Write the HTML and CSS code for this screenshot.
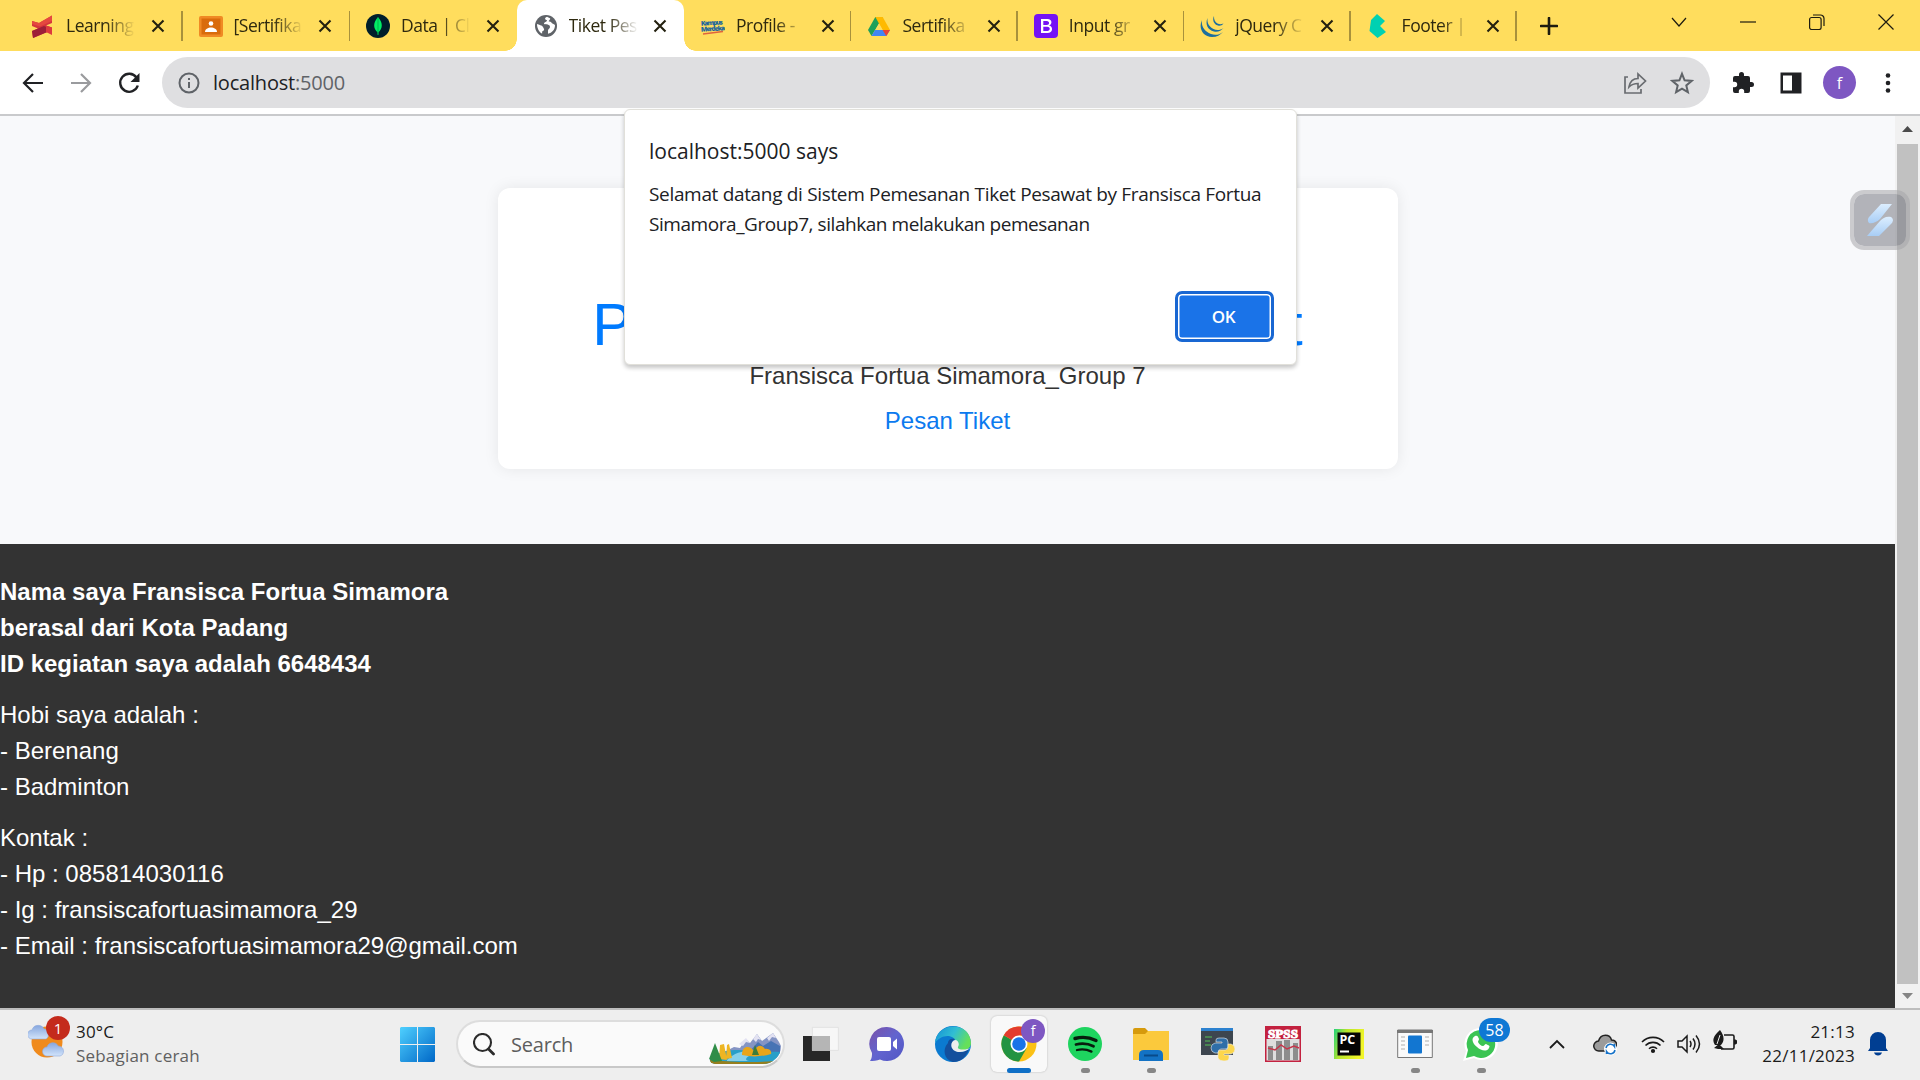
FILE: index.html
```html
<!DOCTYPE html>
<html lang="id">
<head>
<meta charset="utf-8">
<title>Tiket Pesawat</title>
<link rel="stylesheet" href="styles.css">
</head>
<body>
<svg class="defs" width="0" height="0">
  <symbol id="x" viewBox="0 0 14 14"><path d="M1.500 1.500l11 11M12.500 1.500l-11 11" stroke="#23200f" stroke-width="2.100" fill="none"/></symbol>
  <linearGradient id="gw" x1="0" y1="0" x2="1" y2="1"><stop offset="0" stop-color="#4fd0ff"/><stop offset="1" stop-color="#0067c7"/></linearGradient>
  <linearGradient id="gp" x1="0" y1="0" x2="0" y2="1"><stop offset="0" stop-color="#dceeff"/><stop offset="1" stop-color="#a8cdf5"/></linearGradient>
  <linearGradient id="gc" x1="0" y1="0" x2="0" y2="1"><stop offset="0" stop-color="#86a6de"/><stop offset="1" stop-color="#d2e4fb"/></linearGradient>
</svg>

<header class="tabs">
  <div class="tab wide">
    <svg class="fav" viewBox="0 0 24 24"><path d="M1 7l7 2 13-7.500V9l-6 2.500 6 2V16L2 24l-1-7 6-2.500L1 12z" fill="#d5353c"/><path d="M1 17l12-5 8 3.500v.5L2 24z" fill="#9d1f38"/><path d="M1 7l7 2 13-7.500V7L9 12.500 1 10z" fill="#e5483f"/><path d="M15 11.500l6 2V21l-6-3z" fill="#dc3a3e"/></svg>
    <span class="label">Learning</span><svg class="close"><use href="#x"/></svg>
  </div>
  <div class="tab wide">
    <svg class="fav" viewBox="0 0 24 24"><rect y="2" width="24" height="21" rx="2" fill="#f08a24"/><rect x="2.500" y="4.500" width="19" height="16" fill="#d96c0c"/><circle cx="12" cy="9.500" r="2.300" fill="#fff"/><path d="M6 18c0-6 12-6 12 0z" fill="#fff"/></svg>
    <span class="label">[Sertifika</span><svg class="close"><use href="#x"/></svg>
  </div>
  <div class="tab wide nosep">
    <svg class="fav" viewBox="0 0 24 24"><circle cx="12" cy="12" r="12" fill="#001e2b"/><path d="M12 3c5 6 5 11 .4 15.500V21h-.8v-2.500C7 14 7 9 12 3z" fill="#00ed64"/><path d="M12 4v16" stroke="#00a34c" stroke-width=".8"/></svg>
    <span class="label">Data | Cl</span><svg class="close"><use href="#x"/></svg>
  </div>
  <div class="tab wide active">
    <svg class="fav" viewBox="0 0 24 24"><circle cx="12" cy="12" r="11" fill="#5f6368"/><path d="M13 2.800c-3 1-2 3 0 3.500 0 2-3 1.500-3 3.700 2 .6 6 0 6 3 0 1.500-2 1.800-2 3.500v3.200c4-1 7-4 7-8.500 0-1-2-1-3-2s-1.500-2-3-1.500c-1-1.500 2-2 1-3.500zM3 10c2 1 5 1 6 3s2 3 0 4 0 2-1 2.600C5 18 3 14 3 10z" fill="#fff"/></svg>
    <span class="label">Tiket Pes</span><svg class="close"><use href="#x"/></svg>
  </div>
  <div class="tab">
    <svg class="fav" viewBox="0 0 24 24"><g font-family="Open Sans,sans-serif" font-weight="800" font-size="6.600" fill="#1a659c"><text x="0" y="11" textLength="22" transform="rotate(-3 12 10)">Kampus</text><text x="0" y="17" textLength="24" transform="rotate(-3 12 15)">Merdeka</text></g><path d="M2 20l20-2.500" stroke="#e0633c" stroke-width="1.400"/></svg>
    <span class="label">Profile -</span><svg class="close"><use href="#x"/></svg>
  </div>
  <div class="tab">
    <svg class="fav" viewBox="0 0 24 24"><path d="M8.300 3h7.400L12 9.500 4.500 22 1 16z" fill="#1ea05a"/><path d="M15.700 3L23 16h-7.400L8.300 3z" fill="#ffba00"/><path d="M8 16h15l-3.700 6H4.500z" fill="#4285f4"/><path d="M15.600 16H23l-3.700 6z" fill="#ea4335"/><path d="M12 9.500L15.600 16H8.300z" fill="#ffdd5d"/></svg>
    <span class="label">Sertifika</span><svg class="close"><use href="#x"/></svg>
  </div>
  <div class="tab">
    <svg class="fav" viewBox="0 0 24 24"><rect width="24" height="24" rx="4" fill="#7412f5"/><path d="M7 5h6.500c5 0 5 5.500 1.500 6.500 4.500 1 4 7.500-1.500 7.500H7zM9.300 7v4h3.500c3 0 3-4 0-4zM9.300 12.800V17h4c3.300 0 3.300-4.200 0-4.200z" fill="#fff" fill-rule="evenodd"/></svg>
    <span class="label">Input gr</span><svg class="close"><use href="#x"/></svg>
  </div>
  <div class="tab">
    <svg class="fav" viewBox="0 0 24 24" fill="#1c6e9e"><path d="M2 6c-4 8 1 17 10 17 5 0 8-2 11-5-4 3-8 3.500-12 2C4 17 1 12 2 6z"/><path d="M7.500 4c-2.500 6 0 12 6.500 13.500 4 .8 7-.5 9.500-3.500-3.500 2.500-7 2.500-10 1C8.500 12.500 7 8.500 7.500 4z"/><path d="M14 2c-2 4 0 8.500 4 9.500 2 .5 4 0 5.500-2-2.500 1-4 1-6 0-2.600-1.600-3.700-4-3.500-7.500z"/></svg>
    <span class="label">jQuery C</span><svg class="close"><use href="#x"/></svg>
  </div>
  <div class="tab">
    <svg class="fav" viewBox="0 0 24 24"><path d="M10 0L4 6 2.500 17l8 7 8.500-6-6-6 5-5z" fill="#00d1b2"/></svg>
    <span class="label">Footer |</span><svg class="close"><use href="#x"/></svg>
  </div>
  <svg class="plus" viewBox="0 0 18 18"><path d="M9 1v16M1 9h16" stroke="#1d1b10" stroke-width="2.600" stroke-linecap="round"/></svg>
  <div class="winctl">
    <svg viewBox="0 0 16 16"><path d="M1 4l7 8 7-8"/></svg>
    <svg viewBox="0 0 16 16"><path d="M0 8h16"/></svg>
    <svg viewBox="0 0 16 16"><rect x=".6" y="3.500" width="11.500" height="12" rx="2"/><path d="M4 1h7.500a3.500 3.500 0 0 1 3.500 3.500V12"/></svg>
    <svg viewBox="0 0 16 16"><path d="M.5 .5l15 15M15.500 .5l-15 15"/></svg>
  </div>
</header>

<nav class="toolbar">
  <svg class="nav" viewBox="0 0 24 24"><path d="M22 12H3M12 3l-9 9 9 9" stroke="#202124" stroke-width="2.200" fill="none"/></svg>
  <svg class="nav" viewBox="0 0 24 24"><path d="M2 12h19M12 3l9 9-9 9" stroke="#9a9b9e" stroke-width="2.200" fill="none"/></svg>
  <svg class="nav" viewBox="0 0 24 24"><path d="M19.500 6.500A9 9 0 1 0 20.800 14.500" stroke="#202124" stroke-width="2.400" fill="none"/><path d="M22.500 2v9h-9z" fill="#202124"/></svg>
  <div class="omnibox">
    <svg class="info" viewBox="0 0 22 22" fill="none" stroke="#5f6368" stroke-width="2"><circle cx="11" cy="11" r="9.500"/><path d="M11 10v6M11 6v2"/></svg>
    <span class="url">localhost<i>:5000</i></span>
    <svg class="share" viewBox="0 0 24 24" fill="none" stroke="#696c70" stroke-width="1.700"><path d="M5 6H2v16h16v-4"/><path d="M6 16c1-6 4-8.500 9-8.500V3l7.500 7-7.500 7v-4.500c-4 0-6.500 1-9 3.500z"/></svg>
    <svg class="star" viewBox="0 0 24 24" fill="none" stroke="#5f6368" stroke-width="2"><path d="M12 2.800l2.600 6.500 7 .6-5.300 4.500 1.600 6.800L12 17.600l-5.900 3.600 1.600-6.800-5.300-4.500 7-.6z"/></svg>
  </div>
  <div class="actions">
    <svg viewBox="0 0 24 24"><path d="M20.500 11H19V7a2 2 0 0 0-2-2h-4V3.500a2.500 2.500 0 0 0-5 0V5H4a2 2 0 0 0-2 2v3.800h1.500a2.700 2.700 0 0 1 0 5.400H2V20a2 2 0 0 0 2 2h3.800v-1.500a2.700 2.700 0 0 1 5.400 0V22H17a2 2 0 0 0 2-2v-4h1.500a2.500 2.500 0 0 0 0-5z" fill="#202124"/></svg>
    <svg viewBox="0 0 24 24"><path d="M1.500 1.500h21v21h-21z" fill="#202124"/><path d="M4 4.500h9v15H4z" fill="#fff"/></svg>
    <span class="avatar">f</span>
    <svg viewBox="0 0 24 24" fill="#202124"><circle cx="12" cy="4.500" r="2.300"/><circle cx="12" cy="12" r="2.300"/><circle cx="12" cy="19.500" r="2.300"/></svg>
  </div>
</nav>

<div class="viewport">
  <div class="page">
    <main class="hero">
      <section class="card">
        <h1>Pemesanan Tiket Pesawat</h1>
        <p>Fransisca Fortua Simamora_Group 7</p>
        <a>Pesan Tiket</a>
      </section>
    </main>
    <footer class="foot">
      <p><b>Nama saya Fransisca Fortua Simamora<br>berasal dari Kota Padang<br>ID kegiatan saya adalah 6648434</b></p>
      <p>Hobi saya adalah :<br>- Berenang<br>- Badminton</p>
      <p>Kontak :<br>- Hp : 085814030116<br>- Ig : fransiscafortuasimamora_29<br>- Email : fransiscafortuasimamora29@gmail.com</p>
    </footer>
  </div>
  <div class="scroll">
    <svg viewBox="0 0 11 6"><path d="M0 6L5.500 0 11 6z" fill="#4b4b4b"/></svg>
    <div class="thumb"></div>
    <svg viewBox="0 0 11 6"><path d="M0 0l5.500 6L11 0z" fill="#858585"/></svg>
  </div>
  <div class="widget"><svg viewBox="0 0 26 34"><path d="M14 1h11L13 16c-3 3-8 5-11 4-2-3-1-5 1-7z" fill="url(#gp)"/><path d="M12 33H0l13-15c3-3 6-5 11-4 3 2 2 5 0 7z" fill="url(#gp)"/></svg></div>
</div>

<div class="dialog">
  <h2>localhost:5000 says</h2>
  <p><span class="l1">Selamat datang di Sistem Pemesanan Tiket Pesawat by Fransisca Fortua</span><br><span class="l2">Simamora_Group7, silahkan melakukan pemesanan</span></p>
  <button class="ok">OK</button>
</div>

<div class="taskbar">
  <div class="weather">
    <div class="wicon">
      <svg viewBox="0 0 38 36"><circle cx="19" cy="18" r="15.500" fill="#f08a1c"/><path d="M4 15a4.500 4.500 0 0 1 0-9C6-1 15 1 16 5c5 0 6 8 2 10z" fill="url(#gc)" stroke="#8fa9dc" stroke-width=".6"/><path d="M19 32a4.500 4.500 0 0 1 0-9c2-6 10-5 11-1 7 0 7 9 2 10z" fill="url(#gc)" stroke="#8fa9dc" stroke-width=".6"/></svg>
      <span class="one">1</span>
    </div>
    <div class="wtext"><span>30°C</span><span class="dim">Sebagian cerah</span></div>
  </div>
  <svg class="start" viewBox="0 0 35 35" fill="url(#gw)"><path d="M1 0h16v17H0V1zM18 0h16l1 1v16H18zM0 18h17v17H1l-1-1zM18 18h17v16l-1 1H18z"/></svg>
  <div class="search">
    <svg class="mag" viewBox="0 0 22 23" fill="none" stroke="#2b2b2b"><circle cx="9.500" cy="9.500" r="8.500" stroke-width="2.100"/><path d="M15.500 16l5 5" stroke-width="2.800" stroke-linecap="round"/></svg>
    <span>Search</span>
    <svg class="scene" viewBox="0 0 72 32"><path d="M15 20l10-5 6 1 6-9 4 4 7-9 5 7 11-8 6 9 2 4v12H15z" fill="#8494c4"/><path d="M42 18l7-8 5 4 8-5 9 5v8H40z" fill="#4773b4"/><path d="M30 12l7-6 4 5-4-1-3 4zM44 7l4-5 4 6-3-1-2 3zM58 6l6-5 3 5-4-1-3 4z" fill="#e3e2f2"/><path d="M1 26c20-13 36-6 71-6-1 7-6 12-12 12H6c-4 0-6-3-5-6z" fill="#299fc8"/><path d="M18 28c8-8 18-10 30-9l-8 5c-5 3-3 5 2 5H18z" fill="#86d0ea"/><path d="M1 28c20 2 45 3 64 1-2 2-4 3-7 3H6c-3 0-5-1-5-4z" fill="#977f1e"/><path d="M33 23c0-11 9-9 12-4 4-7 8-6 11-2 5-1 7 3 6 5-10 3-20 3-29 1z" fill="#e8a519"/><path d="M10 27l1-14 4-1 3 16zM17 27l1-14 2-1 3 14z" fill="#edb523"/><path d="M6 11L0 27l5 3 8-1z" fill="#2f8d48"/><path d="M46 13l-3 10h7z" fill="#3c7d3a"/></svg>
  </div>
  <div class="apps">
    <div class="app"><svg viewBox="0 0 36 36"><path d="M0 10h27v25H0z" fill="#272727"/><path d="M9.400 1.400h26v23h-26z" fill="#f7f7f7" stroke="#dedede" stroke-width=".8"/><path d="M9 10h18v15H9z" fill="#b5b5b5"/></svg></div>
    <div class="app"><svg viewBox="0 0 36 36"><linearGradient id="gv" x1="0" y1="0" x2="1" y2="1"><stop offset="0" stop-color="#7b52a8"/><stop offset=".5" stop-color="#6264cf"/><stop offset="1" stop-color="#5156c4"/></linearGradient><path d="M18 1a17 17 0 1 1-7 32.500C8 35 4 35 1 35c2-3 2-5 2-8A17 17 0 0 1 18 1z" fill="url(#gv)"/><rect x="8" y="11" width="14" height="14" rx="2" fill="#fff"/><path d="M24 16l4-3.500v11L24 20z" fill="#fff"/></svg></div>
    <div class="app"><svg viewBox="0 0 36 36"><linearGradient id="ge" x1="0" y1="0" x2="1" y2=".4"><stop offset="0" stop-color="#138fd6"/><stop offset=".55" stop-color="#31bed3"/><stop offset="1" stop-color="#66e05a"/></linearGradient><circle cx="18" cy="18" r="18" fill="#0b7ad0"/><path d="M0 17C1-4 35-6 36 17c0 6-6 8-11 7-5-1-2-3-3-6C19 6 5 9 0 17z" fill="url(#ge)"/><path d="M13 17c0-4 4-5 7-4-6 4-4 13 5 13 4 0 7-2 9-3C31 32 25 36 18 36 9 34 7 23 13 17z" fill="#134f9d"/><path d="M20 14c-6 2-5 12 5 12 4 0 7-2 9-3l3-1-5 1c-3 1-10 1-9-2 2-3 0-7-3-7z" fill="#eee"/></svg></div>
    <div class="app current"><svg viewBox="0 0 36 36"><circle cx="18" cy="18" r="17.500" fill="#fbc116"/><path d="M18 18L2.800 9.200A17.500 17.500 0 0 0 18 35.500l7.500-13z" fill="#229342"/><path d="M18 18L2.800 9.200A17.500 17.500 0 0 1 33.200 9.500H18z" fill="#e33b2e"/><circle cx="18" cy="18" r="8.500" fill="#fff"/><circle cx="18" cy="18" r="6.800" fill="#1a73e8"/></svg><span class="prof">f</span><i></i></div>
    <div class="app run"><svg viewBox="0 0 36 36"><circle cx="18" cy="18" r="17" fill="#1ed45f"/><g fill="none" stroke="#071d0d" stroke-linecap="round"><path d="M8 12.500c7-2 15-1 21 2" stroke-width="3.400"/><path d="M9 18.500c6-1.500 12-1 17.500 1.800" stroke-width="2.800"/><path d="M10 24c5-1.200 10-.6 14.500 1.600" stroke-width="2.300"/></g></svg><i></i></div>
    <div class="app run"><svg viewBox="0 0 36 36"><path d="M0 4q0-2 2-2h10l3 3v5H0z" fill="#d69a0c"/><path d="M0 8h12l3-3h21v29H0z" fill="#fbc93c"/><path d="M6 35v-6q0-5 5-5h14q5 0 5 5v6z" fill="#1372c4"/><path d="M11 29.500h14" stroke="#084a8a" stroke-width="2"/></svg><i></i></div>
    <div class="app"><svg viewBox="0 0 36 36"><path d="M2 2h32v27H2z" fill="#3d464f"/><path d="M2 2h32v3H2z" fill="#2c81cf"/><path d="M6 11h7M6 15h5M6 19h6" stroke="#4d9b54" stroke-width="1.400"/><g stroke="#eee" stroke-width=".6"><path d="M20 12h5q4 0 4 4v5q0 2-3 2h-4q-3 0-3 4h-3q-4-1-4-5t4-5h7v-1h-6v-2q0-2 3-2z" fill="#2f6ea8"/><path d="M29 18h3q4 1 4 5t-4 5h-7v1h5v3q0 3-5 3t-6-3v-5q0-3 3-3h4q3 0 3-3z" fill="#fcd64c"/></g></svg></div>
    <div class="app"><svg viewBox="0 0 36 36"><path d="M0 0h36v36H0z" fill="#c3213f"/><path d="M1.500 13h33v21.500h-33z" fill="#dedede"/><text x="3" y="11.500" font-family="Liberation Serif,serif" font-weight="700" font-size="13" fill="#fff" stroke="#fff" textLength="30" lengthAdjust="spacingAndGlyphs">SPSS</text><path d="M3 20h5v14H3zM11 15h6v19h-6zM19 14h6v20h-6zM28 17h5v17h-5z" fill="#8d8d8d"/><path d="M3 22l7 2 6-5 6 4 7-3 5 2" stroke="#c6354a" stroke-width="1.500" fill="none"/></svg></div>
    <div class="app"><svg viewBox="0 0 36 36"><linearGradient id="gy" x1="0" y1="0" x2="1" y2=".3"><stop offset="0" stop-color="#1fd17c"/><stop offset=".4" stop-color="#b7e52c"/><stop offset="1" stop-color="#f1f52a"/></linearGradient><path d="M3 3h30v30H3z" fill="url(#gy)"/><path d="M6.500 6.500h23v23h-23z" fill="#050505"/><text x="8.500" y="18" font-family="Open Sans,sans-serif" font-weight="700" font-size="12.500" fill="#fff">PC</text><path d="M9 25.500h9" stroke="#fff" stroke-width="2"/></svg></div>
    <div class="app run"><svg viewBox="0 0 36 36"><path d="M.7 4h34.600v27.500H.7z" fill="#fafafa" stroke="#777"/><path d="M0 4h36v3H0z" fill="#777"/><rect x="11" y="9.500" width="14" height="18" rx="1" fill="#1276d1"/><path d="M4 11h4M4 15h4M4 19h4M4 23h4M28 11h4M28 15h4M28 19h4" stroke="#c8c8c8" stroke-width="1.500"/></svg><i></i></div>
    <div class="app run"><svg viewBox="0 0 36 36"><path d="M18 2a16 16 0 1 1-7 30L0 35l3-10A16 16 0 0 1 18 2z" fill="#fff"/><path d="M18 4a14 14 0 1 1-7 26L3 32l2-8A14 14 0 0 1 18 4z" fill="#3bc453"/><path d="M12 10c2-1 3 0 4 3 0 1-1 2-1 3 1 2 3 4 5 4 1 0 2-2 3-2 4 2 4 2 3 4-2 4-8 3-12-1-5-4-6-9-2-11z" fill="#fff"/></svg><span class="cnt">58</span><i></i></div>
  </div>
  <div class="tray">
    <svg class="chev" viewBox="0 0 16 10"><path d="M1 9l7-7 7 7" fill="none" stroke="#1b1b1b" stroke-width="1.800"/></svg>
    <svg class="t1" viewBox="0 0 24 24"><path d="M6 19a5 5 0 0 1-.5-10C8 1 17 2 18.500 8c5 0 6 5 5 7l-8 4z" fill="#9b9b9b" stroke="#222" stroke-width="1.500"/><circle cx="17.500" cy="17" r="6.500" fill="#fff"/><path d="M13 16a4.600 4.600 0 0 1 8.500-1.500V12M22 18a4.600 4.600 0 0 1-8.500 1.500V22" fill="none" stroke="#1672c8" stroke-width="1.500"/></svg>
    <svg class="t2" viewBox="0 0 24 24" fill="none" stroke="#1b1b1b" stroke-width="1.600"><path d="M1 10a15.500 15.500 0 0 1 22 0M4.500 13.500a10.500 10.500 0 0 1 15 0M8 16.800a5.700 5.700 0 0 1 8 0"/><circle cx="12" cy="19" r="1.300" fill="#1b1b1b"/></svg>
    <svg class="t3" viewBox="0 0 24 24" fill="none" stroke="#1b1b1b" stroke-width="1.500"><path d="M1 9h4l5-5v16l-5-5H1zM13 9q2 3 0 6M16 6.500q4 5.500 0 11M19 3.500q7 8.500 0 17"/></svg>
    <svg class="t4" viewBox="0 0 24 24"><path d="M11 5h8.500q1.500 0 1.500 1.500v11q0 1.500-1.500 1.500H8" fill="none" stroke="#1b1b1b" stroke-width="1.600"/><path d="M21 9.500h1.500l1.500 1v3l-1.500 1H21zM7 0c4 5 5 11 1 15H2C-2 9 2 5 7 0zM1 18l6-5v2l4 4H5z" fill="#1b1b1b"/><path d="M7 5L4 14" stroke="#eee"/></svg>
    <div class="clock"><span>21:13</span><span>22/11/2023</span></div>
    <svg class="bell" viewBox="0 0 20 24"><path d="M2 16V8a8 8 0 0 1 16 0v8l2 3H0zM6 20.500h8q-1 3-4 3t-4-3z" fill="#003e92"/></svg>
  </div>
</div>
</body>
</html>
```
FILE: styles.css
```css
* { box-sizing: border-box; }
body { margin: 0; width: 1920px; height: 1080px; overflow: hidden; display: flex; flex-direction: column; position: relative; font-family: "Open Sans", "Noto Sans", sans-serif; background: #fff; }
svg { display: block; flex: none; }
.defs { position: absolute; }

/* tab strip */
.tabs { height: 51px; flex: none; background: #ffdd5d; display: flex; align-items: center; padding-left: 14px; }
.tab { position: relative; width: 166.400px; height: 51px; flex: none; display: flex; align-items: center; padding-left: 17px; }
.tab.wide { width: 167.500px; }
.tab::after { content: ""; position: absolute; right: -1px; top: 11px; width: 1.500px; height: 30px; background: #a8913c; }
.tab.nosep::after { display: none; }
.fav { width: 24px; height: 24px; }
.label { width: 68px; margin: -2px 0 0 11px; font-size: 17.500px; letter-spacing: -.45px; white-space: nowrap; color: #2e290f; -webkit-mask-image: linear-gradient(90deg, #000 58%, transparent 102%); mask-image: linear-gradient(90deg, #000 58%, transparent 102%); }
.close { width: 14px; height: 14px; margin-left: 16.500px; }
.tab.active { background: #fff; border-radius: 10px 10px 0 0; }
.tab.active::before, .tab.active::after { content: ""; position: absolute; top: auto; bottom: 0; width: 12px; height: 12px; }
.tab.active::before { left: -12px; background: radial-gradient(circle at 0 0, #ffdd5d 11.500px, #fff 12px); }
.tab.active::after { right: -12px; background: radial-gradient(circle at 100% 0, #ffdd5d 11.500px, #fff 12px); }
.plus { width: 18px; height: 18px; margin-left: 24px; }
.winctl { display: flex; margin-left: auto; gap: 53px; padding-right: 26px; padding-bottom: 8px; }
.winctl svg { width: 16px; height: 16px; fill: none; stroke: #1d1b10; stroke-width: 1.200; }

/* toolbar */
.toolbar { height: 65px; flex: none; border-bottom: 2px solid #c9cacc; display: flex; align-items: center; padding-left: 21px; gap: 24px; background: #fff; }
.nav { width: 24px; height: 24px; }
.omnibox { width: 1548px; height: 51px; margin: 0 0 0 -3px; border-radius: 26px; background: #dfdfe1; display: flex; align-items: center; padding: 0 16px 0 16px; }
.info { width: 22px; height: 22px; }
.url { margin-left: 13px; font-size: 20px; letter-spacing: -.2px; color: #202124; flex: 1; }
.url i { font-style: normal; color: #5f6368; }
.share { width: 24px; height: 24px; margin-right: 23px; }
.star { width: 24px; height: 24px; }
.actions { display: flex; align-items: center; gap: 20px; margin-left: -3px; }
.actions svg { width: 24px; height: 24px; }
.actions svg + svg { margin-left: 4px; }
.avatar { width: 33px; height: 33px; border-radius: 50%; background: #7e57c2; color: #fff; font-size: 16px; display: flex; align-items: center; justify-content: center; }

/* page */
.viewport { height: 892px; flex: none; display: flex; position: relative; }
.page { width: 1895px; font-family: "Liberation Sans", Arial, sans-serif; background: #f8f9fb; display: flex; flex-direction: column; }
.hero { height: 428px; padding-top: 72px; }
.card { width: 900px; height: 281px; margin: 0 auto; border-radius: 12px; background: #fff; box-shadow: 0 0 15px rgba(0,0,0,.08); display: flex; flex-direction: column; align-items: center; padding-top: 103px; color: #333; font-size: 24px; line-height: 36px; }
.card h1 { margin: 0; font-weight: 400; font-size: 60px; line-height: 67px; color: #007bff; }
.card p { margin: 0 0 9px; }
.card a { color: #0b7aef; }
.foot { flex: 1; background: #333; color: #fff; padding-top: 30px; font-size: 24px; line-height: 36px; }
.foot p { margin: 0 0 15px; }
.scroll { width: 25px; background: #f1f1f1; display: flex; flex-direction: column; align-items: center; padding: 10px 0 9px; }
.scroll svg { width: 11px; height: 6px; }
.thumb { width: 21px; flex: 1; margin: 12px 0 9px; background: #c1c1c1; }
.widget { position: absolute; left: 1850px; top: 74px; width: 60px; height: 60px; border-radius: 14px; background: rgba(120,122,132,.55); background-clip: padding-box; border: 4px solid rgba(165,165,170,.55); display: flex; align-items: center; justify-content: center; }
.widget svg { width: 26px; height: 34px; }

/* alert */
.dialog { position: absolute; left: 624px; top: 109px; width: 673px; height: 256px; border: 1px solid #e1e0da; border-radius: 6px; background: #fff; box-shadow: 0 3px 4px rgba(0,0,0,.22); padding: 24px 22px 22px 24px; display: flex; flex-direction: column; color: #202124; }
.dialog h2 { margin: 0; font-weight: 400; font-size: 21px; line-height: 34px; letter-spacing: 0; }
.dialog p { margin: 11px 0 0; font-size: 19px; line-height: 30px; white-space: nowrap; }
.l1 { letter-spacing: -.33px; }
.l2 { letter-spacing: -.44px; }
.ok { margin: auto 0 0 auto; width: 99px; height: 51px; border: 3px solid #1967d2; border-radius: 7px; background: #1a73e8; box-shadow: inset 0 0 0 1.500px #fff; color: #fff; font: 600 17px "Open Sans", sans-serif; letter-spacing: -.3px; padding: 0 2px 0 0; }

/* taskbar */
.taskbar { height: 72px; flex: none; border-top: 2px solid #bdbdbd; background: #eee; display: flex; align-items: center; color: #1b1b1b; font-size: 17px; padding-bottom: 2px; }
.weather { width: 400px; display: flex; padding-left: 28px; gap: 10px; align-items: center; }
.wicon { position: relative; width: 38px; height: 36px; margin-top: -4px; }
.wicon svg { width: 38px; height: 36px; }
.one { position: absolute; left: 18px; top: -8px; width: 24px; height: 24px; border-radius: 50%; background: #c42b1c; color: #fff; font-size: 15px; line-height: 24px; text-align: center; }
.wtext, .clock { display: flex; flex-direction: column; line-height: 24px; white-space: nowrap; }
.wtext { letter-spacing: .2px; }
.dim { color: #606060; }
.start { width: 35px; height: 35px; }
.search { width: 329px; height: 48px; margin: 0 3px 0 21px; border: 2px solid #ddd; border-bottom-color: #c8c8c8; border-radius: 24px; background: #fafafa; display: flex; align-items: center; padding-left: 15px; font-size: 20px; color: #5d5d5d; }
.mag { width: 22px; height: 23px; }
.search span { margin-left: 16px; letter-spacing: -.2px; }
.scene { width: 72px; height: 32px; margin-left: auto; margin-top: 7px; margin-right: 2px; border-radius: 0 0 18px 6px; }
.apps { display: flex; }
.app { position: relative; width: 66px; height: 56px; display: flex; align-items: center; justify-content: center; }
.app svg { position: relative; width: 36px; height: 36px; }
.current::before { content: ""; position: absolute; left: 5px; top: 0; width: 56px; height: 56px; border-radius: 6px; background: #f9f9f9; box-shadow: 0 0 2px rgba(0,0,0,.25); }
.app i { position: absolute; left: 29px; bottom: -1px; width: 9px; height: 5px; border-radius: 3px; background: #868686; }
.current i { left: 21px; width: 24px; background: #0f6fc6; }
.prof, .cnt { position: absolute; height: 24px; border-radius: 12px; color: #fff; text-align: center; line-height: 24px; }
.prof { left: 35px; top: 3px; width: 24px; background: #7e57c2; font-size: 14px; }
.cnt { left: 31px; top: 2px; width: 31px; background: #0f78d4; font-size: 16px; }
.tray { display: flex; align-items: center; flex: 1; padding-left: 35px; }
.chev { width: 16px; height: 10px; }
.t1, .t2, .t3, .t4 { width: 24px; height: 24px; }
.t1 { margin-left: 28px; }
.t2 { margin-left: 24px; }
.t3, .t4 { margin-left: 12px; }
.t4 { margin-top: -4px; }
.clock { align-items: flex-end; width: 118px; letter-spacing: .25px; }
.bell { width: 20px; height: 24px; margin-left: 13px; }
```
